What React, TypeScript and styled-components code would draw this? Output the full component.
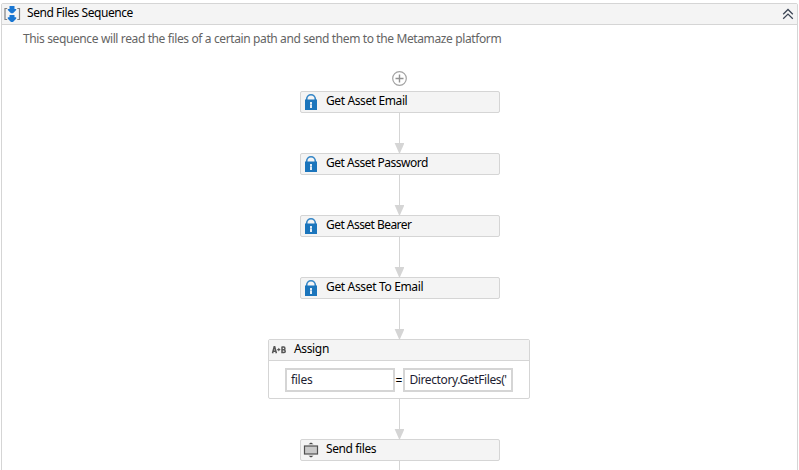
import React from "react";
import styled, { createGlobalStyle } from "styled-components";

const LINE = "#d5d5d5";
const HEAD = "#f4f4f4";

const GlobalStyle = createGlobalStyle`
  * { box-sizing: border-box; }
  html, body { margin: 0; background: #fff; overflow: hidden; }
  body {
    font-family: "Noto Sans", "Open Sans", sans-serif;
    font-size: 12px;
    color: #000;
  }
`;

const Viewport = styled.main`
  height: 470px;
  padding: 3px 1px 0;
  overflow: hidden;
`;

const Sequence = styled.section`
  height: 500px;
  border: 1px solid ${LINE};
  border-radius: 2px;
`;

const SequenceHeader = styled.header`
  display: flex;
  align-items: center;
  height: 21px;
  padding: 0 3px 0 1px;
  background: ${HEAD};
  border-bottom: 1px solid ${LINE};
  svg { flex: none; display: block; }
`;

const Label = styled.span<{ $spacing?: number }>`
  line-height: 16px;
  white-space: pre;
  letter-spacing: ${(p) => p.$spacing ?? -0.39}px;
`;

const SequenceTitle = styled(Label)`
  flex: 1;
  margin: -2px 0 0 6px;
`;

const Annotation = styled.p`
  margin: 6px 0 0 21px;
  height: 16px;
  line-height: 16px;
  white-space: nowrap;
  color: #646464;
`;

const Flow = styled.div`
  display: flex;
  flex-direction: column;
  align-items: center;
  width: 262px;
  margin: 24px 0 0 266px;
  svg { display: block; flex: none; }
`;

const AddPoint = styled.div`
  height: 20px;
  padding-left: 1px;
`;

const Node = styled.div`
  display: flex;
  align-items: center;
  width: 200px;
  height: 22px;
  margin-left: 2px;
  padding-left: 2px;
  background: ${HEAD};
  border: 1px solid ${LINE};
  border-radius: 2px;
`;

const NodeTitle = styled(Label)`
  margin: -2px 0 0 7px;
`;

const AssignBox = styled.div`
  width: 262px;
  height: 60px;
  background: #fff;
  border: 1px solid ${LINE};
  border-radius: 2px;
`;

const AssignHeader = styled.div`
  display: flex;
  align-items: center;
  height: 21px;
  padding-left: 2px;
  background: ${HEAD};
  border-bottom: 1px solid ${LINE};
`;

const AssignRow = styled.div`
  display: flex;
  align-items: center;
  padding: 7px 16px 0;
`;

const Field = styled.div`
  width: 110px;
  height: 24px;
  padding: 1px 0 0 4px;
  border: 2px solid ${LINE};
  background: #fff;
  color: #1e1e32;
  overflow: hidden;
`;

const Equals = styled.span`
  width: 9px;
  padding-top: 2px;
  text-align: center;
  line-height: 16px;
`;

const SequenceIcon = () => (
  <svg width="18" height="18" viewBox="0 0 18 18">
    <path d="M4.2 3.5H2V14.5H4.2M14.3 3.5H16.5V14.5H14.3" fill="none" stroke="#808080" strokeWidth="1.2" />
    <path d="M6.5 1H11.5V4H13.2V5L10 8.2H8L4.8 5V4H6.5Z" fill="#1976d2" />
    <path d="M6.5 10H11.5V12.2H13.2V13.8L10 17H8L4.8 13.8V12.2H6.5Z" fill="#1976d2" />
  </svg>
);

const CollapseIcon = () => (
  <svg width="12" height="12" viewBox="0 0 12 12">
    <path d="M1.2 6.2L6 1.5L10.8 6.2M1.2 10.8L6 6.1L10.8 10.8" fill="none" stroke="#3d4656" strokeWidth="1.3" />
  </svg>
);

const LockIcon = () => (
  <svg width="16" height="18" viewBox="0 0 16 18">
    <path d="M3.7 7V6A4.3 4.3 0 0 1 12.3 6V7" fill="none" stroke="#3385c6" strokeWidth="1.6" />
    <rect x="2" y="6.5" width="12" height="10.5" fill="#1b75bc" />
    <path d="M7 9H9V11H8.7V12H9V15H7V12H7.3V11H7Z" fill="#e3edf6" />
  </svg>
);

const ScopeIcon = () => (
  <svg width="16" height="16" viewBox="0 0 16 16">
    <path d="M5.5 2.3L8 .6L10.5 2.3ZM5.5 13.7L8 15.4L10.5 13.7Z" fill="#444" />
    <rect x="1.5" y="4" width="13" height="8" fill="#c9c9c9" stroke="#505050" strokeWidth="1.2" />
  </svg>
);

const AssignIcon = () => (
  <svg width="16" height="12" viewBox="0 0 16 12">
    <g fill="none" stroke="#555" strokeWidth="1.5">
      <path d="M1.5 9.2L3.2 2.8H3.7L5.4 9.2M2.1 7.2H4.8" />
      <path d="M11 3.1H12.8Q13.9 3.1 13.9 4.5T12.8 5.8H11M12.8 5.8Q14.2 5.8 14.2 7.2T12.8 8.5H11V2.4" />
    </g>
    <path d="M6.2 5H7.3V3.7L9.6 5.6L7.3 7.5V6.2H6.2Z" fill="#555" />
  </svg>
);

const AddIcon = () => (
  <svg width="16" height="16" viewBox="0 0 16 16">
    <circle cx="7.5" cy="7.5" r="6.8" fill="#fff" stroke="#a3a3a3" strokeWidth="1.2" />
    <path d="M7.5 3.5V11.5M3.5 7.5H11.5" stroke="#929292" strokeWidth="1.4" />
  </svg>
);

const Connector = () => (
  <svg width="10" height="40" viewBox="0 0 10 40">
    <path d="M5.5 0V32" stroke={LINE} />
    <path d="M.6 30H10.4L6 40H5Z" fill={LINE} />
  </svg>
);

const assets = [
  { name: "Get Asset Email", spacing: -0.39 },
  { name: "Get Asset Password", spacing: -0.48 },
  { name: "Get Asset Bearer", spacing: -0.54 },
  { name: "Get Asset To Email", spacing: -0.34 },
];

export default function App() {
  return (
    <Viewport>
      <GlobalStyle />
      <Sequence>
        <SequenceHeader>
          <SequenceIcon />
          <SequenceTitle $spacing={-0.44}>Send Files Sequence</SequenceTitle>
          <CollapseIcon />
        </SequenceHeader>
        <Annotation>
          <Label $spacing={-0.38}>
            This sequence will read the files of a certain path and send them to the Metamaze platform
          </Label>
        </Annotation>
        <Flow>
          <AddPoint>
            <AddIcon />
          </AddPoint>
          {assets.map((asset) => (
            <React.Fragment key={asset.name}>
              <Node>
                <LockIcon />
                <NodeTitle $spacing={asset.spacing}>{asset.name}</NodeTitle>
              </Node>
              <Connector />
            </React.Fragment>
          ))}
          <AssignBox>
            <AssignHeader>
              <AssignIcon />
              <NodeTitle $spacing={-0.35}>Assign</NodeTitle>
            </AssignHeader>
            <AssignRow>
              <Field>
                <Label $spacing={-0.3}>files</Label>
              </Field>
              <Equals>=</Equals>
              <Field>
                <Label>Directory.GetFiles('</Label>
              </Field>
            </AssignRow>
          </AssignBox>
          <Connector />
          <Node>
            <ScopeIcon />
            <NodeTitle>Send files</NodeTitle>
          </Node>
          <Connector />
        </Flow>
      </Sequence>
    </Viewport>
  );
}
